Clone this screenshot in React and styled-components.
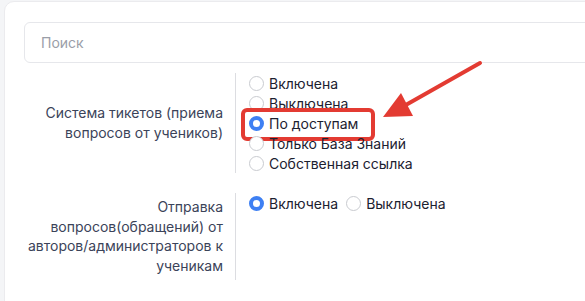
import styled, { createGlobalStyle } from "styled-components";

const GlobalStyle = createGlobalStyle`
  html, body {
    margin: 0;
    padding: 0;
    background: #f4f5f7;
    font-family: Inter, "Noto Sans", sans-serif;
    overflow: hidden;
  }
`;

const Page = styled.div`
  position: relative;
  width: 585px;
  height: 301px;
  overflow: hidden;
`;

const Card = styled.section`
  margin: 1px -40px 0 4px;
  background: #fff;
  border: 1px solid #ebebee;
  border-radius: 10px;
  padding: 20px 20px 20px 19px;
  height: 400px;
`;

const Search = styled.input`
  box-sizing: border-box;
  display: block;
  width: 100%;
  height: 41px;
  border: 1px solid #e6e7eb;
  border-radius: 6px;
  padding: 0 16px;
  font-family: inherit;
  font-size: 14px;
  color: #1f2430;
  outline: none;
  &::placeholder {
    color: #9a9ea8;
  }
`;

const Rows = styled.div`
  display: flex;
  flex-direction: column;
  gap: 20px;
  margin-top: 10px;
`;

const Row = styled.div`
  display: grid;
  grid-template-columns: 199px 1fr;
  column-gap: 12px;
`;

const Label = styled.div`
  align-self: center;
  text-align: right;
  font-size: 14px;
  line-height: 19.7px;
  color: #3b4359;
  padding: 4px 0;
`;

const Options = styled.div`
  display: flex;
  flex-direction: ${(p) => (p.$inline ? "row" : "column")};
  align-items: flex-start;
  gap: ${(p) => (p.$inline ? "8px" : "0")};
  border-left: 1px solid #dcdde1;
  padding-left: 13px;
`;

const Option = styled.label`
  position: relative;
  display: flex;
  align-items: center;
  gap: 5px;
  height: 20px;
  font-size: 14px;
  color: #1c2130;
  white-space: nowrap;
`;

const Radio = styled.span`
  box-sizing: border-box;
  width: 15px;
  height: 15px;
  border-radius: 50%;
  background: #fff;
  border: ${(p) => (p.$checked ? "4px solid #3e80f3" : "1px solid #c9cbd0")};
`;

const Highlight = styled.span`
  position: absolute;
  left: -8px;
  top: -5px;
  width: 134px;
  height: 33px;
  box-sizing: border-box;
  border: 4px solid #e33b32;
  border-radius: 6px;
  pointer-events: none;
`;

const Arrow = styled.svg`
  position: absolute;
  left: 370px;
  top: 50px;
`;

const ticketOptions = [
  { text: "Включена" },
  { text: "Выключена" },
  { text: "По доступам", checked: true, marked: true },
  { text: "Только База Знаний" },
  { text: "Собственная ссылка" },
];

const App = () => {
  return (
    <Page>
      <GlobalStyle />
      <Card>
        <Search placeholder="Поиск" />
        <Rows>
          {/* ticket system */}
          <Row>
            <Label>Система тикетов (приема вопросов от учеников)</Label>
            <Options>
              {ticketOptions.map((o) => (
                <Option key={o.text}>
                  <Radio $checked={o.checked} />
                  {o.text}
                  {o.marked && <Highlight />}
                </Option>
              ))}
            </Options>
          </Row>
          {/* questions from authors */}
          <Row>
            <Label>
              Отправка вопросов(обращений) от авторов/администраторов к ученикам
            </Label>
            <Options $inline>
              <Option>
                <Radio $checked />
                Включена
              </Option>
              <Option>
                <Radio />
                Выключена
              </Option>
            </Options>
          </Row>
        </Rows>
      </Card>
      <Arrow width="120" height="80" viewBox="0 0 120 80">
        <line
          x1="110"
          y1="13"
          x2="34"
          y2="56"
          stroke="#e33b32"
          strokeWidth="4"
          strokeLinecap="round"
        />
        <polygon points="13,67 31,43 43,66" fill="#e33b32" />
      </Arrow>
    </Page>
  );
};

export default App;
